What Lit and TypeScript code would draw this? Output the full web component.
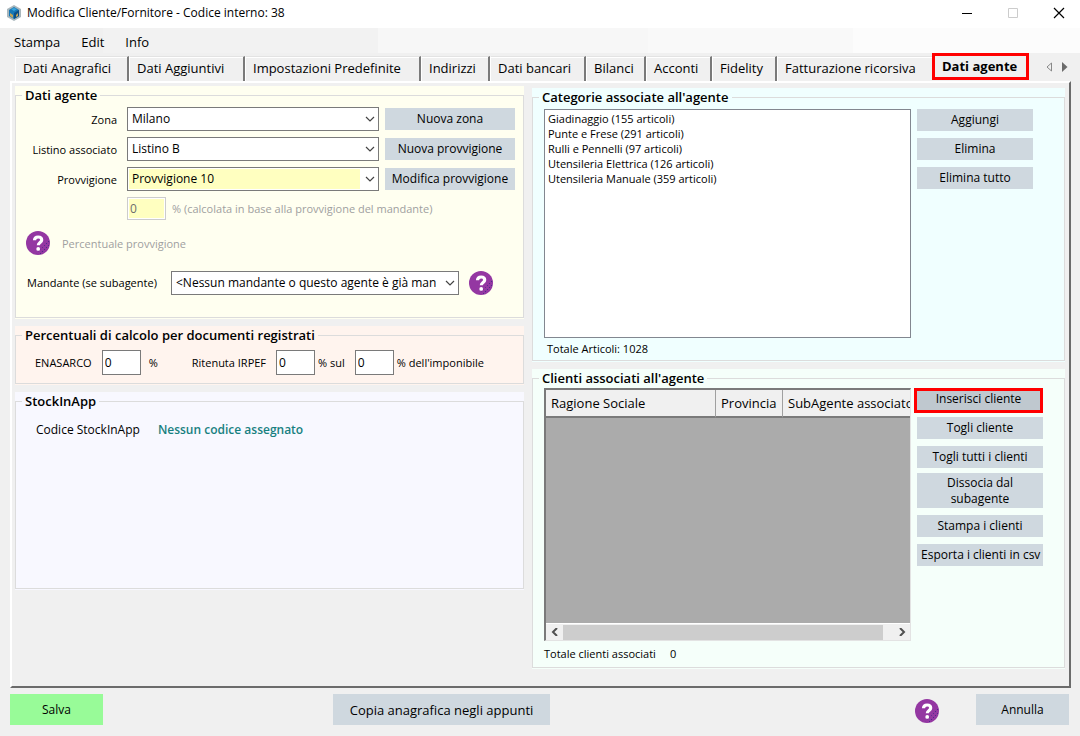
import { LitElement, html, css } from "lit";
import { customElement, property, state } from "lit/decorators.js";
import { classMap } from "lit/directives/class-map.js";
import { styleMap } from "lit/directives/style-map.js";

const controls = css`
  * {
    box-sizing: border-box;
  }
  button,
  input,
  select {
    font: inherit;
    color: inherit;
    margin: 0;
    border-radius: 0;
  }
  button {
    border: 0;
    padding: 0;
    background: none;
    white-space: nowrap;
  }
`;

@customElement("help-button")
class HelpButton extends LitElement {
  static styles = [
    controls,
    css`
      :host {
        display: block;
        flex: none;
      }
      button,
      svg {
        display: block;
        width: 24px;
        height: 24px;
      }
    `,
  ];

  render() {
    return html`<button aria-label="Aiuto">
      <svg viewBox="0 0 24 24">
        <defs>
          <pattern id="grain" width="4" height="4" patternUnits="userSpaceOnUse">
            <rect width="1" height="1" fill="#4b2a8c" />
            <rect x="2" y="2" width="1" height="1" fill="#4b2a8c" />
          </pattern>
        </defs>
        <circle cx="12" cy="12" r="12" fill="#9437a2" />
        <path d="M23 9A12 12 0 0 1 10 23.500L15 18z" fill="url(#grain)" />
        <path
          d="M8.500 9.200C8.600 6.600 10.200 6 12.100 6c2.200 0 3.600 1.100 3.600 2.900 0 2.600-3.400 2.500-3.400 5.300"
          fill="none"
          stroke="#fff"
          stroke-width="3.200"
        />
        <circle cx="12.200" cy="17.900" r="1.900" fill="#fff" />
      </svg>
    </button>`;
  }
}

@customElement("combo-box")
class ComboBox extends LitElement {
  @property() value = "";
  @property() label = "";
  @property({ type: Boolean }) marked = false;

  static styles = [
    controls,
    css`
      :host {
        display: grid;
        min-width: 0;
      }
      select,
      svg {
        grid-area: 1 / 1;
      }
      select {
        appearance: none;
        width: 100%;
        height: 24px;
        padding: 0 22px 0 4px;
        border: 1px solid #7a7a7a;
        background: #fff;
        outline: 0;
      }
      .marked {
        background: linear-gradient(to left, #fff 18px, #ffffc0 18px);
        box-shadow: inset 0 0 0 1px #fff;
      }
      svg {
        justify-self: end;
        align-self: center;
        width: 10px;
        height: 6px;
        margin-right: 4px;
        pointer-events: none;
      }
    `,
  ];

  render() {
    return html`<select aria-label=${this.label} class=${classMap({ marked: this.marked })}>
        <option>${this.value}</option>
      </select>
      <svg viewBox="0 0 10 6">
        <path d="M1 1l4 4 4-4" fill="none" stroke="#444" stroke-width="1.200" />
      </svg>`;
  }
}

const tabs: { title: string; width: number }[] = [
  { title: "Dati Anagrafici", width: 114 },
  { title: "Dati Aggiuntivi", width: 116 },
  { title: "Impostazioni Predefinite", width: 176 },
  { title: "Indirizzi", width: 69 },
  { title: "Dati bancari", width: 96 },
  { title: "Bilanci", width: 60 },
  { title: "Acconti", width: 66 },
  { title: "Fidelity", width: 65 },
  { title: "Fatturazione ricorsiva", width: 155 },
];

const categories = [
  "Giadinaggio (155 articoli)",
  "Punte e Frese (291 articoli)",
  "Rulli e Pennelli (97 articoli)",
  "Utensileria Elettrica (126 articoli)",
  "Utensileria Manuale (359 articoli)",
];

@customElement("app-root")
class AppRoot extends LitElement {
  @state() private active = "Dati agente";

  static styles = [
    controls,
    css`
      :host {
        display: flex;
        flex-direction: column;
        min-height: 100vh;
        background: #f0f0f0;
        color: #000;
        font: 12px/16px "Open Sans", "Noto Sans", sans-serif;
      }
      .titlebar {
        display: flex;
        align-items: center;
        height: 28px;
        padding: 0 15px 3px 7px;
        background: #fff;
      }
      .titlebar h1 {
        flex: 1;
        margin: 0 0 0 6px;
        font: inherit;
      }
      .appicon {
        width: 14px;
        height: 16px;
      }
      .winbtns {
        display: flex;
        gap: 34px;
      }
      .winbtns svg {
        display: block;
        width: 12px;
        height: 12px;
      }
      .menubar {
        display: flex;
        gap: 21px;
        height: 25px;
        padding: 3px 14px 0;
        background: linear-gradient(
          to right,
          #f0f0f0 9.500%,
          #f2f2f2 9.500% 35%,
          #f7f7f7 35% 60%,
          #f9f9f9 60% 79%,
          #fcfcfc 79%
        );
      }
      .menubar button,
      .tab {
        font-size: 13px;
      }
      .tabs {
        display: flex;
        align-items: flex-end;
        height: 28px;
        padding: 0 11px 0 15px;
      }
      .tab {
        flex: 0 1 auto;
        height: 25px;
        padding: 0 0 2px 7px;
        overflow: hidden;
        text-align: left;
        border-top: 1px solid #e3e3e3;
        border-left: 1px solid #fff;
        border-right: 2px solid #7a7a7a;
        box-shadow: inset 0 1px #fff;
      }
      .tab:nth-last-of-type(2) {
        border-right: 0;
      }
      .tab.active {
        width: 97px;
        height: 27px;
        margin-bottom: 1px;
        border: 3px solid #f00;
        box-shadow: none;
        font-weight: 700;
      }
      .tabscroll {
        display: flex;
        gap: 7px;
        margin: 0 0 9px auto;
      }
      .tabscroll svg {
        display: block;
        width: 8px;
        height: 10px;
      }
      .panel {
        flex: 1;
        display: grid;
        grid-template-columns: 509fr 533fr;
        gap: 8px;
        align-items: start;
        margin: 0 9px 0 10px;
        padding: 3px 4px 17px 3px;
        border: 2px solid #6b6b6b;
        border-top-color: #fff;
        border-left-color: #fff;
      }
      .column {
        display: flex;
        flex-direction: column;
        gap: 7px;
        min-width: 0;
      }
      .column.right {
        padding-top: 2px;
      }
      .group {
        padding-bottom: 1px;
      }
      .yellow {
        background: #fffff0;
      }
      .pink {
        background: #fff4ee;
      }
      .lilac {
        background: #f8f8ff;
      }
      .cyan {
        background: #f0ffff;
      }
      .mint {
        background: #f5fffa;
      }
      fieldset {
        margin: 0;
        padding: 0;
        border: 1px solid #dcdcdc;
        min-width: 0;
      }
      legend {
        margin-left: 6px;
        padding: 0 3px;
        font-size: 13px;
        line-height: 19px;
        font-weight: 600;
      }
      .action {
        height: 22px;
        padding: 0 4px;
        background: #cfd8df;
      }
      .agent {
        display: grid;
        grid-template-columns: 101px 1fr 130px;
        gap: 6px;
        align-items: center;
        padding: 2px 8px 0 0;
      }
      .agent label {
        padding-top: 1px;
        text-align: right;
      }
      .agent label,
      .hint,
      .principal label,
      .total {
        font-size: 11px;
      }
      .agent combo-box {
        margin-left: 4px;
      }
      .percent {
        grid-column: 2 / -1;
        display: flex;
        align-items: center;
        gap: 6px;
        margin-left: 4px;
      }
      .muted {
        color: #a0a0a0;
      }
      .percent input {
        width: 39px;
        height: 23px;
        padding: 0 2px;
        border: 1px solid #ccc;
        background: #ffffc0;
        box-shadow: inset 0 0 0 1px #fff;
        color: #6d6d6d;
      }
      .hint {
        display: flex;
        align-items: center;
        gap: 12px;
        padding: 11px 10px 0;
      }
      .hint span {
        padding-top: 2px;
      }
      .principal {
        display: grid;
        grid-template-columns: 134px 1fr auto;
        align-items: center;
        gap: 10px;
        padding: 16px 30px 22px 11px;
      }
      .rates {
        display: flex;
        align-items: center;
        padding: 5px 19px 8px;
        font-size: 11px;
      }
      .rates input {
        width: 39px;
        height: 25px;
        margin: 0 3px 0 10px;
        padding: 0 2px;
        border: 1px solid #7a7a7a;
        background: #fff;
        font-size: 12px;
      }
      .rates .gap {
        margin: 0 34px 0 5px;
      }
      .stock {
        display: flex;
        gap: 18px;
        min-height: 177px;
        padding: 11px 20px;
      }
      .stock strong {
        color: #178080;
        font-weight: 600;
      }
      .split {
        display: grid;
        grid-template-columns: minmax(0, 1fr) auto;
        gap: 6px;
      }
      .categories {
        padding: 2px 31px 3px 11px;
      }
      .clients {
        padding: 0 21px 5px 11px;
      }
      .listbox {
        width: 100%;
        height: 229px;
        padding: 1px 2px;
        border: 1px solid #828790;
        background: #fff;
        outline: 0;
        overflow: hidden;
        font-size: 11px;
      }
      .listbox option {
        min-height: 15px;
        padding: 0 1px;
      }
      .actions {
        display: flex;
        flex-direction: column;
        gap: 7px;
      }
      .categories .actions {
        width: 116px;
      }
      .clients .actions {
        width: 129px;
        margin-left: -3px;
        padding-left: 3px;
      }
      .action.framed {
        height: 25px;
        margin: 0 0 -3px -3px;
        padding: 0 4px 4px;
        border: 3px solid #f00;
        background: #bfc8cf;
      }
      .action.tall {
        height: 35px;
        margin: -2px 0 0;
        padding: 0 28px;
        white-space: normal;
      }
      .total {
        margin: 3px 0 0 3px;
      }
      .clients .total {
        display: flex;
        gap: 14px;
        margin: 5px 0 0;
      }
      .gridview {
        display: flex;
        flex-direction: column;
        height: 253px;
        overflow: hidden;
        border: 2px solid #7a7a7a;
        border-right: 1px solid #e3e3e3;
        border-bottom: 1px solid #e3e3e3;
        background: #ababab;
      }
      table {
        width: 100%;
        table-layout: fixed;
        border-collapse: separate;
        border-spacing: 0;
      }
      th {
        height: 28px;
        padding: 0 0 0 5px;
        overflow: hidden;
        background: #f0f0f0;
        border-right: 1px solid #a0a0a0;
        border-bottom: 2px solid #7a7a7a;
        font-size: 13px;
        font-weight: 400;
        text-align: left;
        white-space: nowrap;
      }
      th:last-child {
        border-right: 0;
      }
      .c1 {
        width: 170px;
      }
      .c2 {
        width: 67px;
      }
      .scrollbar {
        display: flex;
        align-items: center;
        height: 17px;
        margin-top: auto;
        border-top: 1px solid #fff;
        background: #f0f0f0;
      }
      .scrollbar button {
        width: 17px;
      }
      .scrollbar svg {
        display: block;
        width: 8px;
        height: 8px;
        margin: 0 auto;
      }
      .thumb {
        height: 15px;
        background: #cdcdcd;
      }
      .track {
        flex: 1;
      }
      .footer {
        display: grid;
        grid-template-columns: 93px 1fr auto 93px;
        align-items: center;
        padding: 6px 11px 11px 10px;
      }
      .footer .action {
        height: 31px;
      }
      .footer .save {
        background: #98fb98;
      }
      .footer .copy {
        width: 217px;
        margin-left: 230px;
        font-size: 13px;
      }
      .footer help-button {
        margin: 3px 37px 0 0;
      }
    `,
  ];

  private group(tone: string, title: string, body: unknown) {
    return html`<section class="group ${tone}">
      <fieldset>
        <legend>${title}</legend>
        ${body}
      </fieldset>
    </section>`;
  }

  private agentGroup() {
    const rows = [
      { label: "Zona", value: "Milano", action: "Nuova zona", marked: false },
      { label: "Listino associato", value: "Listino B", action: "Nuova provvigione", marked: false },
      { label: "Provvigione", value: "Provvigione 10", action: "Modifica provvigione", marked: true },
    ];
    return this.group(
      "yellow",
      "Dati agente",
      html`<div class="agent">
          ${rows.map(
            (r) => html`<label for=${r.label}>${r.label}</label>
              <combo-box id=${r.label} .label=${r.label} .value=${r.value} .marked=${r.marked}></combo-box>
              <button class="action">${r.action}</button>`
          )}
          <div class="percent muted">
            <input id="pct" value="0" disabled />
            <label for="pct">% (calcolata in base alla provvigione del mandante)</label>
          </div>
        </div>
        <div class="hint muted"><help-button></help-button><span>Percentuale provvigione</span></div>
        <div class="principal">
          <label for="mandante">Mandante (se subagente)</label>
          <combo-box
            id="mandante"
            label="Mandante (se subagente)"
            value="<Nessun mandante o questo agente è già man"
          ></combo-box>
          <help-button></help-button>
        </div>`
    );
  }

  private ratesGroup() {
    return this.group(
      "pink",
      "Percentuali di calcolo per documenti registrati",
      html`<div class="rates">
        <label for="enasarco">ENASARCO</label><input id="enasarco" value="0" />
        <span class="gap">%</span>
        <label for="irpef">Ritenuta IRPEF</label><input id="irpef" value="0" />
        <label for="base">% sul</label><input id="base" value="0" />
        <span>% dell'imponibile</span>
      </div>`
    );
  }

  private clientsGroup() {
    return this.group(
      "mint",
      "Clienti associati all'agente",
      html`<div class="clients">
        <div class="split">
          <div class="gridview">
            <table>
              <colgroup>
                <col class="c1" />
                <col class="c2" />
                <col />
              </colgroup>
              <thead>
                <tr>
                  <th>Ragione Sociale</th>
                  <th>Provincia</th>
                  <th>SubAgente associato</th>
                </tr>
              </thead>
            </table>
            <div class="scrollbar">
              <button aria-label="Scorri a sinistra">
                <svg viewBox="0 0 8 8"><path d="M6 0L2 4l4 4" fill="none" stroke="#505050" stroke-width="2" /></svg>
              </button>
              <div class="track"><div class="thumb" style=${styleMap({ width: "97%" })}></div></div>
              <button aria-label="Scorri a destra">
                <svg viewBox="0 0 8 8"><path d="M2 0l4 4-4 4" fill="none" stroke="#505050" stroke-width="2" /></svg>
              </button>
            </div>
          </div>
          <div class="actions">
            <button class="action framed">Inserisci cliente</button>
            <button class="action">Togli cliente</button>
            <button class="action">Togli tutti i clienti</button>
            <button class="action tall">Dissocia dal subagente</button>
            <button class="action">Stampa i clienti</button>
            <button class="action">Esporta i clienti in csv</button>
          </div>
        </div>
        <div class="total"><span>Totale clienti associati</span><span>0</span></div>
      </div>`
    );
  }

  render() {
    return html`
      <header class="titlebar">
        <svg class="appicon" viewBox="0 0 14 16">
          <path d="M7 0l7 4v8l-7 4-7-4V4z" fill="#a9b7bd" />
          <path d="M7 2l5 3v6l-5 3-5-3V5z" fill="#1677b5" />
          <path d="M7 8l5-3v6l-5 3z" fill="#0c4f86" />
          <path d="M3 8l3 2v3l-3-2zM9 10l2-2v3l-2 1z" fill="#c3a457" />
          <path d="M4 4l3-1 3 1-3 2z" fill="#39a5dc" />
        </svg>
        <h1>Modifica Cliente/Fornitore - Codice interno: 38</h1>
        <div class="winbtns">
          <button aria-label="Riduci">
            <svg viewBox="0 0 12 12"><path d="M1 6.500h10" stroke="#000" /></svg>
          </button>
          <button aria-label="Ingrandisci">
            <svg viewBox="0 0 12 12"><path d="M1.500 1.500h9v9h-9z" fill="none" stroke="#ccc" /></svg>
          </button>
          <button aria-label="Chiudi">
            <svg viewBox="0 0 12 12"><path d="M1 1l10 10M11 1L1 11" stroke="#000" stroke-width="1.200" /></svg>
          </button>
        </div>
      </header>
      <nav class="menubar">
        <button>Stampa</button>
        <button>Edit</button>
        <button>Info</button>
      </nav>
      <div class="tabs" role="tablist">
        ${tabs.map(
          (t) => html`<button class="tab" role="tab" style=${styleMap({ width: `${t.width}px` })}>${t.title}</button>`
        )}
        <button class="tab active" role="tab" aria-selected="true">${this.active}</button>
        <div class="tabscroll">
          <button aria-label="Schede precedenti">
            <svg viewBox="0 0 8 10"><path d="M5.500 1v8L1 5z" fill="none" stroke="#888" /></svg>
          </button>
          <button aria-label="Schede successive">
            <svg viewBox="0 0 8 10"><path d="M1 0v10l5.500-5z" fill="#6b6b6b" /></svg>
          </button>
        </div>
      </div>
      <main class="panel">
        <div class="column">
          ${this.agentGroup()} ${this.ratesGroup()}
          ${this.group(
            "lilac",
            "StockInApp",
            html`<div class="stock"><span>Codice StockInApp</span><strong>Nessun codice assegnato</strong></div>`
          )}
        </div>
        <div class="column right">
          ${this.group(
            "cyan",
            "Categorie associate all'agente",
            html`<div class="categories">
              <div class="split">
                <select class="listbox" multiple aria-label="Categorie associate all'agente">
                  ${categories.map((c) => html`<option>${c}</option>`)}
                </select>
                <div class="actions">
                  <button class="action">Aggiungi</button>
                  <button class="action">Elimina</button>
                  <button class="action">Elimina tutto</button>
                </div>
              </div>
              <div class="total">Totale Articoli: 1028</div>
            </div>`
          )}
          ${this.clientsGroup()}
        </div>
      </main>
      <footer class="footer">
        <button class="action save">Salva</button>
        <div><button class="action copy">Copia anagrafica negli appunti</button></div>
        <help-button></help-button>
        <button class="action">Annulla</button>
      </footer>
    `;
  }
}
